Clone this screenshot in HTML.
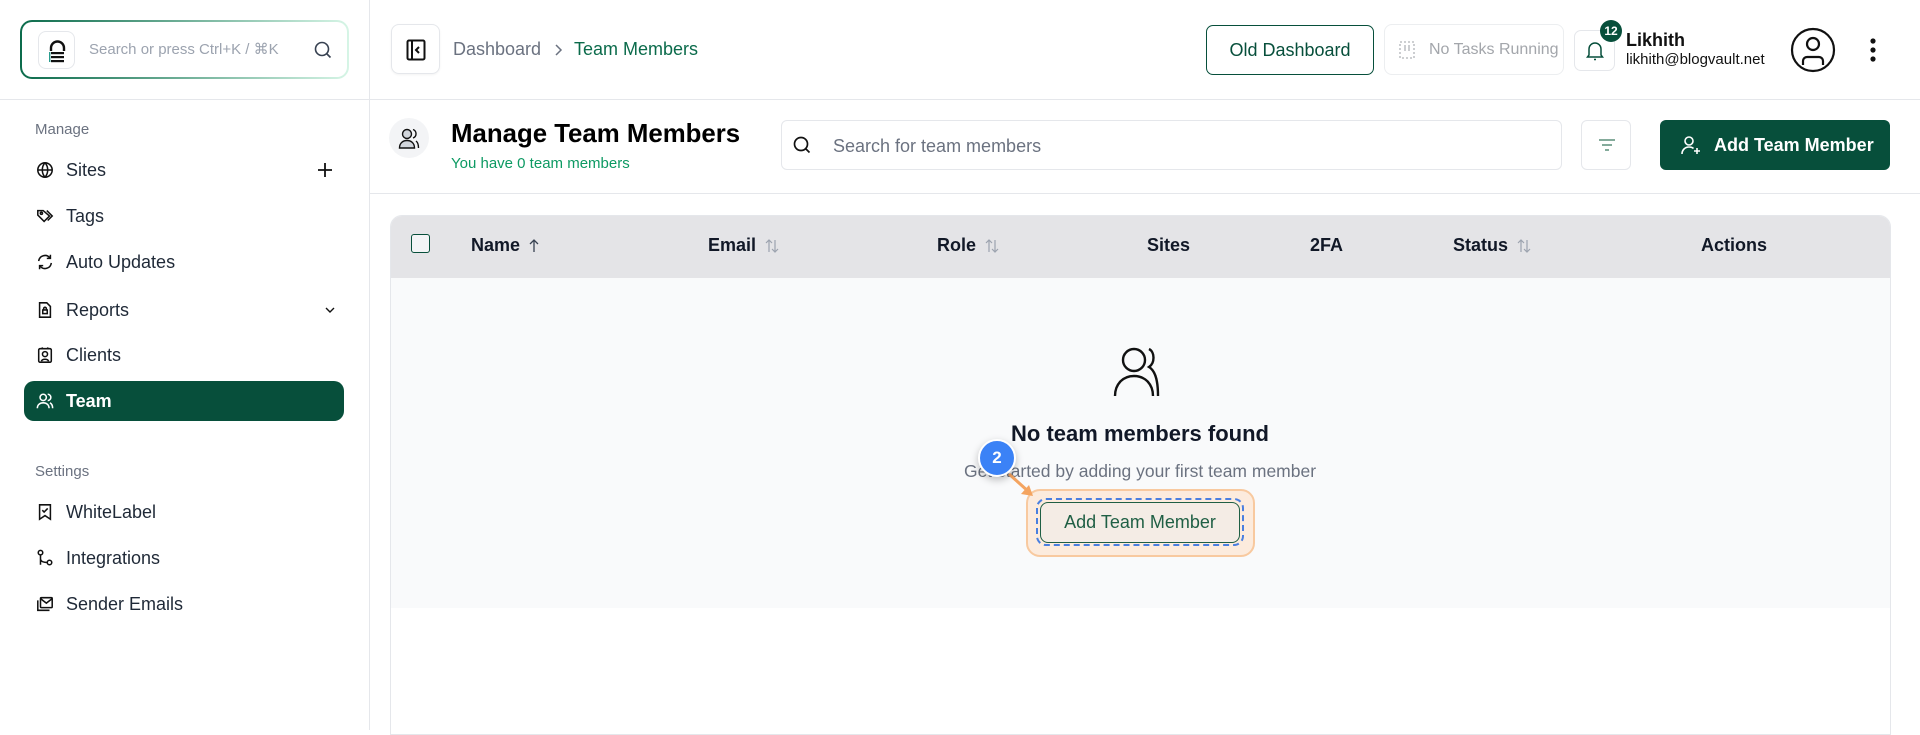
<!DOCTYPE html>
<html><head><meta charset="utf-8"><style>
*{box-sizing:border-box;margin:0;padding:0}
body{width:1920px;height:730px;overflow:hidden;background:#fff;font-family:"Liberation Sans",Arial,sans-serif;color:#111827;position:relative}
.abs{position:absolute}
svg{display:block}
.side-item{position:absolute;left:24px;width:320px;height:40px;display:flex;align-items:center;padding-left:12px;font-size:18px;color:#1f2937;border-radius:10px}
.side-item svg{margin-right:12px;flex:none}
.th{position:absolute;top:235px;font-size:18px;font-weight:bold;color:#111827;display:flex;align-items:center;gap:8px}
</style></head><body>
<div class="abs" style="left:369px;top:0;width:1px;height:730px;background:#e5e7eb"></div>
<div class="abs" style="left:0;top:99px;width:1920px;height:1px;background:#e5e7eb"></div>

<div class="abs" style="left:20px;top:20px;width:329px;height:59px;border-radius:12px;padding:2px;background:linear-gradient(90deg,#0b6b4b,#d6f5e6)">
 <div style="width:100%;height:100%;background:#fff;border-radius:10px;position:relative">
  <div class="abs" style="left:16px;top:9px;width:37px;height:38px;border:1px solid #e5e7eb;border-radius:8px">
   <svg width="37" height="38" viewBox="0 0 37 38"><path d="M12 19 v-3 a6.5 6.5 0 0 1 13 0 v3" fill="none" stroke="#111" stroke-width="2.4"/><rect x="12" y="20" width="13" height="2.2" fill="#111"/><rect x="12" y="24" width="13" height="2.2" fill="#111"/><rect x="12" y="28" width="13" height="2.2" fill="#111"/><rect x="10" y="20" width="1.4" height="10" fill="#2a9d8f"/></svg>
  </div>
  <div class="abs" style="left:67px;top:18px;font-size:15px;color:#9ca3af">Search or press Ctrl+K / ⌘K</div>
  <svg class="abs" style="left:291px;top:18px" width="20" height="20" viewBox="0 0 20 20"><circle cx="9" cy="9" r="6.5" fill="none" stroke="#374151" stroke-width="1.6"/><path d="M14 14l3.5 3.5" stroke="#374151" stroke-width="1.6"/></svg>
 </div>
</div>

<div class="abs" style="left:35px;top:121px;font-size:15px;color:#6b7280">Manage</div>
<div class="side-item" style="top:150px"><svg width="18" height="18" viewBox="0 0 20 20" fill="none" stroke="#111" stroke-width="1.7"><circle cx="10" cy="10" r="8"/><path d="M2 10h16M10 2c-4 4.5-4 11.5 0 16M10 2c4 4.5 4 11.5 0 16"/></svg>Sites
 <svg class="abs" style="left:292px;top:11px" width="18" height="18" viewBox="0 0 18 18"><path d="M9 2v14M2 9h14" stroke="#111" stroke-width="1.8"/></svg></div>
<div class="side-item" style="top:196px"><svg width="18" height="18" viewBox="0 0 20 20" fill="none" stroke="#111" stroke-width="1.7"><path d="M2 4v5l7 7 6-6-7-6z"/><circle cx="6" cy="7" r="1.2"/><path d="M12 4l6 6-5 5"/></svg>Tags</div>
<div class="side-item" style="top:242px"><svg width="18" height="18" viewBox="0 0 20 20" fill="none" stroke="#111" stroke-width="1.7"><path d="M3 9a7 7 0 0 1 12.5-3.5M17 11a7 7 0 0 1-12.5 3.5"/><path d="M16 2v4h-4M4 18v-4h4"/></svg>Auto Updates</div>
<div class="side-item" style="top:290px"><svg width="18" height="18" viewBox="0 0 20 20" fill="none" stroke="#111" stroke-width="1.7"><path d="M4 2h8l4 4v12H4z"/><rect x="7.5" y="10" width="5" height="4"/><path d="M8.5 10V8.5a1.5 1.5 0 0 1 3 0V10"/></svg>Reports
 <svg class="abs" style="left:300px;top:15px" width="12" height="10" viewBox="0 0 12 10"><path d="M2 3l4 4 4-4" fill="none" stroke="#111" stroke-width="1.4"/></svg></div>
<div class="side-item" style="top:335px"><svg width="18" height="18" viewBox="0 0 20 20" fill="none" stroke="#111" stroke-width="1.7"><rect x="3" y="3" width="14" height="15" rx="1.5"/><circle cx="10" cy="9" r="2.8"/><path d="M6 17c1-3 7-3 8 0M7 1.5v2M13 1.5v2"/></svg>Clients</div>
<div class="side-item" style="top:381px;background:#074f3b;color:#fff;font-weight:bold"><svg width="18" height="18" viewBox="0 0 20 20" fill="none" stroke="#fff" stroke-width="1.7"><circle cx="8" cy="6" r="3.5"/><path d="M1.5 18c0-4 3-6 6.5-6s6.5 2 6.5 6M13 2.5a3.5 3.5 0 0 1 0 7M15.5 12c2 1 3 3 3 6"/></svg>Team</div>
<div class="abs" style="left:35px;top:463px;font-size:15px;color:#6b7280">Settings</div>
<div class="side-item" style="top:492px"><svg width="18" height="18" viewBox="0 0 20 20" fill="none" stroke="#111" stroke-width="1.7"><path d="M4 2h12v16l-6-4-6 4z"/><path d="M7 8l2 2 4-4"/></svg>WhiteLabel</div>
<div class="side-item" style="top:538px"><svg width="18" height="18" viewBox="0 0 20 20" fill="none" stroke="#111" stroke-width="1.7"><circle cx="5" cy="4" r="2.5"/><circle cx="15" cy="15" r="2.5"/><path d="M5 6.5v11M5 11c0 3 4 4 7.5 4"/></svg>Integrations</div>
<div class="side-item" style="top:584px"><svg width="18" height="18" viewBox="0 0 20 20" fill="none" stroke="#111" stroke-width="1.7"><rect x="5" y="3" width="13" height="11" rx="1"/><path d="M5 4l6.5 5L18 4M2 6v11h13"/></svg>Sender Emails</div>

<div class="abs" style="left:391px;top:24px;width:49px;height:50px;border:1px solid #e5e7eb;border-radius:8px;box-shadow:0 1px 2px rgba(0,0,0,.05)">
 <svg style="margin:14px 0 0 14px" width="20" height="22" viewBox="0 0 20 22" fill="none" stroke="#111" stroke-width="2"><rect x="1.5" y="1.5" width="17" height="19" rx="1.5"/><path d="M6 2v18M13 8l-3 3 3 3"/></svg>
</div>
<div class="abs" style="left:453px;top:39px;font-size:18px;color:#6b7280">Dashboard</div>
<svg class="abs" style="left:553px;top:43px" width="10" height="14" viewBox="0 0 10 14"><path d="M3 2l5 5-5 5" fill="none" stroke="#6b7280" stroke-width="1.5"/></svg>
<div class="abs" style="left:574px;top:39px;font-size:18px;color:#0b6b4b">Team Members</div>

<div class="abs" style="left:1206px;top:25px;width:168px;height:50px;border:1.5px solid #074f3b;border-radius:7px;font-size:18px;color:#074f3b;display:flex;align-items:center;justify-content:center">Old Dashboard</div>
<div class="abs" style="left:1384px;top:24px;width:180px;height:51px;border:1px solid #eceef0;border-radius:8px;font-size:16px;color:#a3a6ab;display:flex;align-items:center;padding-left:14px">
 <svg width="16" height="18" viewBox="0 0 16 18" style="margin-right:14px" fill="none" stroke="#b0b3b8" stroke-width="1.3" stroke-dasharray="2 2"><rect x="1" y="1" width="14" height="16"/><path d="M6 4v6M10 4v6" stroke-dasharray="none"/></svg>No Tasks Running</div>
<div class="abs" style="left:1574px;top:30px;width:41px;height:41px;border:1px solid #e5e7eb;border-radius:7px">
 <svg style="margin:9px 0 0 10px" width="20" height="22" viewBox="0 0 20 22" fill="none" stroke="#074f3b" stroke-width="1.5"><path d="M4 15V9a6 6 0 0 1 12 0v6l1.5 2h-15z"/><path d="M9 19.5h2"/></svg>
</div>
<div class="abs" style="left:1600px;top:20px;width:22px;height:22px;border-radius:50%;background:#074f3b;color:#fff;font-size:12px;font-weight:bold;display:flex;align-items:center;justify-content:center">12</div>
<div class="abs" style="left:1626px;top:30px;font-size:18px;font-weight:bold;color:#111">Likhith</div>
<div class="abs" style="left:1626px;top:51px;font-size:15px;color:#111">likhith@blogvault.net</div>
<svg class="abs" style="left:1790px;top:27px" width="46" height="46" viewBox="0 0 46 46" fill="none" stroke="#111" stroke-width="2.2"><circle cx="23" cy="23" r="21"/><circle cx="23" cy="17" r="6"/><path d="M13 38v-4a4 4 0 0 1 4-4h12a4 4 0 0 1 4 4v4"/></svg>
<svg class="abs" style="left:1868px;top:37px" width="10" height="26" viewBox="0 0 10 26" fill="#111"><circle cx="5" cy="4" r="2.6"/><circle cx="5" cy="13" r="2.6"/><circle cx="5" cy="22" r="2.6"/></svg>

<div class="abs" style="left:389px;top:118px;width:40px;height:40px;border-radius:50%;background:#f3f4f6">
 <svg style="margin:8px 0 0 8px" width="24" height="24" viewBox="0 0 24 24" fill="#d1d5db" stroke="#111" stroke-width="1.4"><circle cx="10" cy="8" r="4.5"/><path d="M2.5 22c0-5 3.5-7.5 7.5-7.5s7.5 2.5 7.5 7.5z"/><path d="M16 3.5a4.5 4.5 0 0 1 0 8.5M19 15c2 1.5 2.5 4 2.5 7" fill="none"/></svg>
</div>
<div class="abs" style="left:451px;top:120px;font-size:25.8px;font-weight:bold;color:#000">Manage Team Members</div>
<div class="abs" style="left:451px;top:155px;font-size:15px;color:#0d9a63">You have 0 team members</div>
<div class="abs" style="left:781px;top:120px;width:781px;height:50px;border:1px solid #e5e7eb;border-radius:6px">
 <svg class="abs" style="left:10px;top:14px" width="20" height="20" viewBox="0 0 20 20"><circle cx="9" cy="9" r="6.5" fill="none" stroke="#111" stroke-width="1.7"/><path d="M14 14l3.5 3.5" stroke="#111" stroke-width="1.7"/></svg>
 <div class="abs" style="left:51px;top:15px;font-size:18px;color:#6b7280">Search for team members</div>
</div>
<div class="abs" style="left:1581px;top:120px;width:50px;height:50px;border:1px solid #e5e7eb;border-radius:6px">
 <svg style="margin:17px 0 0 16px" width="18" height="14" viewBox="0 0 18 14" stroke="#5b8f7a" stroke-width="1.6"><path d="M1 2h16M4 7h10M7 12h4"/></svg>
</div>
<div class="abs" style="left:1660px;top:120px;width:230px;height:50px;border-radius:6px;background:#074f3b;color:#fff;font-size:18px;font-weight:bold;display:flex;align-items:center;padding-left:20px">
 <svg width="22" height="22" viewBox="0 0 22 22" fill="none" stroke="#fff" stroke-width="1.6" style="margin-right:12px"><circle cx="9" cy="7" r="4"/><path d="M2 20c0-4 3-7 7-7 2 0 3.5.5 4.5 1.5M17 14v6M14 17h6"/></svg>Add Team Member</div>
<div class="abs" style="left:370px;top:193px;width:1550px;height:1px;background:#e5e7eb"></div>

<div class="abs" style="left:390px;top:215px;width:1501px;height:520px;border:1px solid #e5e7eb;border-radius:12px 12px 0 0;overflow:hidden">
 <div style="height:62px;background:#e4e4e7"></div>
 <div style="height:330px;background:#f9fafb"></div>
</div>
<div class="abs" style="left:411px;top:234px;width:19px;height:19px;border:1.5px solid #074f3b;border-radius:3px;background:#f3f4f6"></div>
<div class="th" style="left:471px">Name <svg width="12" height="14" viewBox="0 0 12 14" fill="none" stroke="#374151" stroke-width="1.3"><path d="M6 13V1M2 5l4-4 4 4"/></svg></div>
<div class="th" style="left:708px">Email <svg width="16" height="16" viewBox="0 0 16 16" fill="none" stroke="#9ca3af" stroke-width="1.2"><path d="M5 14V2M2 5l3-3 3 3M11 2v12M8 11l3 3 3-3"/></svg></div>
<div class="th" style="left:937px">Role <svg width="16" height="16" viewBox="0 0 16 16" fill="none" stroke="#9ca3af" stroke-width="1.2"><path d="M5 14V2M2 5l3-3 3 3M11 2v12M8 11l3 3 3-3"/></svg></div>
<div class="th" style="left:1147px">Sites</div>
<div class="th" style="left:1310px">2FA</div>
<div class="th" style="left:1453px">Status <svg width="16" height="16" viewBox="0 0 16 16" fill="none" stroke="#9ca3af" stroke-width="1.2"><path d="M5 14V2M2 5l3-3 3 3M11 2v12M8 11l3 3 3-3"/></svg></div>
<div class="th" style="left:1701px">Actions</div>

<svg class="abs" style="left:1112px;top:346px" width="56" height="52" viewBox="0 0 56 52" fill="none" stroke="#111" stroke-width="2.4"><circle cx="22" cy="14" r="11"/><path d="M3 50c0-12 8-20 19-20s19 8 19 20M37 3c6 3 6 14 0 18 5 3 9 10 9 29"/></svg>
<div class="abs" style="left:0;width:2280px;top:421px;text-align:center;font-size:22px;font-weight:bold;color:#111827">No team members found</div>
<div class="abs" style="left:0;width:2280px;top:461px;text-align:center;font-size:17.5px;color:#6b7280">Get started by adding your first team member</div>
<div class="abs" style="left:1026px;top:489px;width:229px;height:68px;border:2px solid #f8c99f;border-radius:14px;background:#fcebdd"></div>
<div class="abs" style="left:1036px;top:498px;width:208px;height:48px;border:2px dashed #4a7fe0;border-radius:10px"></div>
<div class="abs" style="left:1040px;top:502px;width:200px;height:41px;border:1.5px solid #1f5f44;border-radius:8px;background:#f4ece5;color:#1f5f44;font-size:18px;display:flex;align-items:center;justify-content:center">Add Team Member</div>
<svg class="abs" style="left:1005px;top:470px" width="30" height="30" viewBox="0 0 30 30"><path d="M4 4l20 18" stroke="#f4a460" stroke-width="3"/><path d="M16 24l12 2-4-11z" fill="#f4a460"/></svg>
<div class="abs" style="left:978px;top:439px;width:38px;height:38px;border-radius:50%;background:#3b82f6;border:2.5px solid #fff;box-shadow:0 3px 8px rgba(0,0,0,.25);color:#fff;font-size:17px;font-weight:bold;display:flex;align-items:center;justify-content:center">2</div>
</body></html>
